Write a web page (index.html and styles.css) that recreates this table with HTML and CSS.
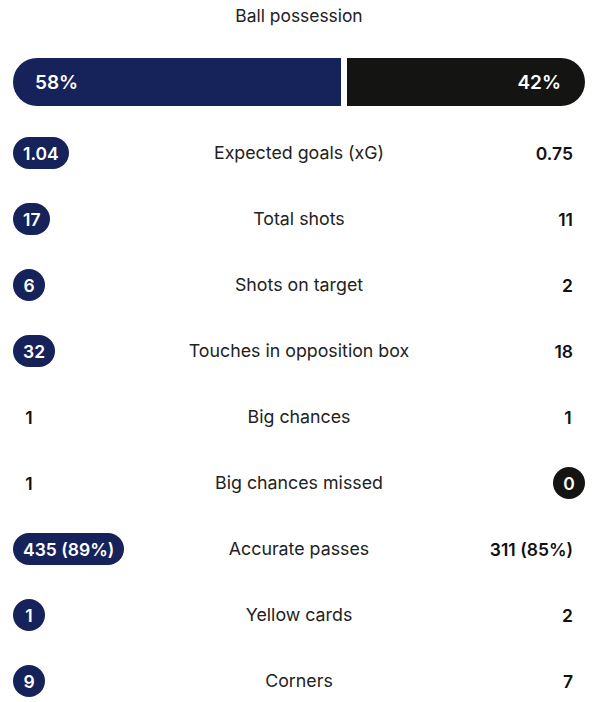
FILE: index.html
```html
<!DOCTYPE html>
<html>
<head>
<meta charset="utf-8">
<link rel="stylesheet" href="styles.css">
</head>
<body>
<div class="stats">
  <div class="title">Ball possession</div>
  <div class="possession">
    <div class="poss home" style="width: 58%">58%</div>
    <div class="poss away" style="width: 42%">42%</div>
  </div>
  <div class="row"><span class="val home-hl">1.04</span><span class="label">Expected goals (xG)</span><span class="val right">0.75</span></div>
  <div class="row"><span class="val home-hl">17</span><span class="label">Total shots</span><span class="val right">11</span></div>
  <div class="row"><span class="val home-hl">6</span><span class="label">Shots on target</span><span class="val right">2</span></div>
  <div class="row"><span class="val home-hl">32</span><span class="label">Touches in opposition box</span><span class="val right">18</span></div>
  <div class="row"><span class="val">1</span><span class="label">Big chances</span><span class="val right">1</span></div>
  <div class="row"><span class="val">1</span><span class="label">Big chances missed</span><span class="val right away-hl">0</span></div>
  <div class="row"><span class="val home-hl">435 (89%)</span><span class="label">Accurate passes</span><span class="val right">311 (85%)</span></div>
  <div class="row"><span class="val home-hl">1</span><span class="label">Yellow cards</span><span class="val right">2</span></div>
  <div class="row"><span class="val home-hl">9</span><span class="label">Corners</span><span class="val right">7</span></div>
</div>
</body>
</html>
```
FILE: styles.css
```css
html, body {
  margin: 0;
  padding: 0;
  background: #fff;
}
body {
  font-family: Inter, "Noto Sans", sans-serif;
  color: #1d1d1d;
}
.stats {
  padding: 0 13px;
}
.title {
  height: 32px;
  line-height: 32px;
  text-align: center;
  font-size: 17.4px;
  color: #222;
}
.possession {
  display: flex;
  gap: 6px;
  margin-top: 26px;
  height: 48px;
}
.poss {
  box-sizing: border-box;
  flex-shrink: 1;
  display: flex;
  align-items: center;
  color: #fff;
  font-weight: 600;
  font-size: 19px;
}
.poss.home {
  background: #16225a;
  border-radius: 24px 0 0 24px;
  padding-left: 22px;
}
.poss.away {
  background: #141413;
  border-radius: 0 24px 24px 0;
  justify-content: flex-end;
  padding-right: 24px;
}
.row {
  display: grid;
  grid-template-columns: 1fr auto 1fr;
  align-items: center;
  height: 66px;
  line-height: 1.2;
}
.possession + .row {
  margin-top: 14px;
}
.label {
  text-align: center;
  font-size: 17.8px;
  color: #222;
}
.val {
  justify-self: start;
  min-width: 32px;
  height: 32px;
  box-sizing: border-box;
  padding: 0 10px;
  border-radius: 16px;
  display: flex;
  align-items: center;
  justify-content: center;
  font-weight: 600;
  font-size: 17.5px;
  color: #111;
}
.val.right {
  justify-self: end;
  padding-right: 12px;
}
.val.right.away-hl {
  padding-right: 10px;
}
.home-hl {
  background: #16225a;
  color: #fff;
}
.away-hl {
  background: #141413;
  color: #fff;
}
```
